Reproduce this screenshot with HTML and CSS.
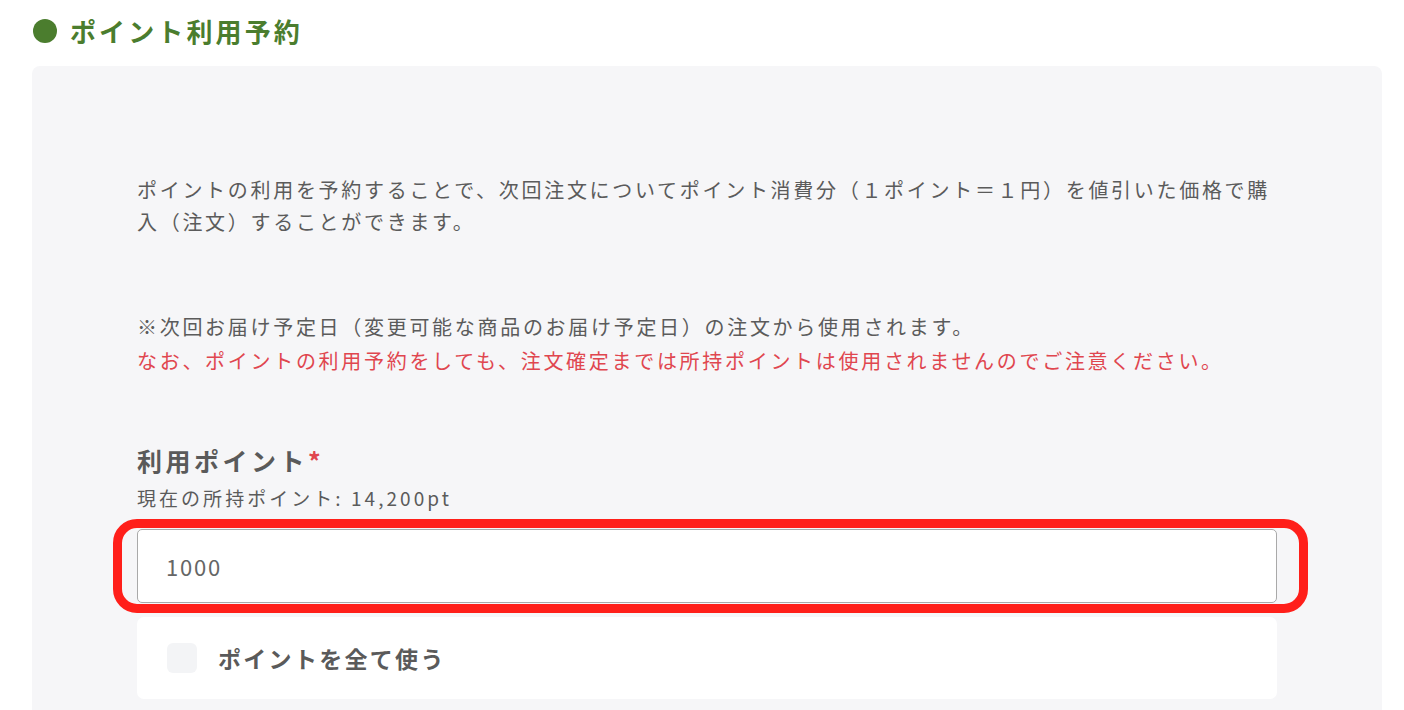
FILE: index.html
```html
<!DOCTYPE html>
<html lang="ja">
<head>
<meta charset="utf-8">
<title>ポイント利用予約</title>
<link rel="stylesheet" href="styles.css">
</head>
<body>
<div class="page">
  <h2 class="title"><span class="dot"></span>ポイント利用予約</h2>
  <section class="panel">
    <p class="lead">ポイントの利用を予約することで、次回注文についてポイント消費分（１ポイント＝１円）を値引いた価格で購入（注文）することができます。</p>
    <p class="note">※次回お届け予定日（変更可能な商品のお届け予定日）の注文から使用されます。<br><span class="warn">なお、ポイントの利用予約をしても、注文確定までは所持ポイントは使用されませんのでご注意ください。</span></p>
    <div class="field">
      <label class="label" for="pt">利用ポイント<span class="req">*</span></label>
      <div class="sub">現在の所持ポイント: 14,200pt</div>
      <div class="input-wrap">
        <input id="pt" class="input" type="text" value="1000">
        <span class="highlight"></span>
      </div>
      <label class="check-card">
        <span class="check"></span>
        <span class="check-text">ポイントを全て使う</span>
      </label>
    </div>
  </section>
</div>
</body>
</html>
```

FILE: styles.css
```css
* { box-sizing: border-box; }
html, body { margin: 0; padding: 0; background: #ffffff; }
body {
  font-family: "Noto Sans CJK JP", "Noto Sans", sans-serif;
  color: #5b5b5b;
  width: 1404px;
  height: 710px;
  overflow: hidden;
}
.page { padding: 0 22px 0 32px; }
.title {
  margin: 0;
  height: 66px;
  display: flex;
  align-items: center;
  padding-bottom: 4px;
  font-size: 26px;
  font-weight: 700;
  letter-spacing: 0.12em;
  color: #4b7d2e;
  line-height: 1;
}
.dot {
  width: 24px;
  height: 24px;
  border-radius: 50%;
  background: #4b7d2e;
  margin: 0 13px 0 1px;
  flex: none;
}
.panel {
  background: #f6f6f8;
  border-radius: 8px;
  padding: 108px 105px 40px 105px;
  min-height: 650px;
}
.lead {
  margin: 0;
  font-size: 20px;
  letter-spacing: 2.7px;
  line-height: 32px;
}
.note {
  margin: 72px 0 0 0;
  font-size: 20px;
  letter-spacing: 2.7px;
  line-height: 34px;
}
.warn { color: #e0464f; }
.field { margin-top: 65px; }
.label {
  display: block;
  font-size: 25px;
  font-weight: 700;
  letter-spacing: 0.14em;
  line-height: 34px;
  color: #5a5a5a;
}
.req { color: #e0464f; }
.sub {
  font-size: 19px;
  letter-spacing: 0.16em;
  line-height: 28px;
  margin-top: 7px;
}
.input-wrap {
  position: relative;
  margin-top: 17px;
}
.input {
  display: block;
  width: 100%;
  height: 74px;
  border: 1px solid #a9a9a9;
  border-radius: 5px;
  background: #ffffff;
  padding: 0 28px;
  font-family: "Noto Sans CJK JP", "Noto Sans", sans-serif;
  font-size: 22px;
  letter-spacing: 0.08em;
  color: #666666;
  outline: none;
}
.highlight {
  position: absolute;
  left: -24px;
  right: -31px;
  top: -10px;
  bottom: -10px;
  border: 9px solid #ff1f1a;
  border-radius: 24px;
  pointer-events: none;
}
.check-card {
  display: flex;
  align-items: center;
  margin-top: 14px;
  height: 82px;
  background: #ffffff;
  border-radius: 7px;
  padding-left: 30px;
}
.check {
  width: 30px;
  height: 30px;
  border-radius: 6px;
  background: #f3f4f6;
  flex: none;
  margin-right: 21px;
}
.check-text {
  font-size: 23px;
  font-weight: 700;
  letter-spacing: 0.1em;
  color: #5a5a5a;
}
```
